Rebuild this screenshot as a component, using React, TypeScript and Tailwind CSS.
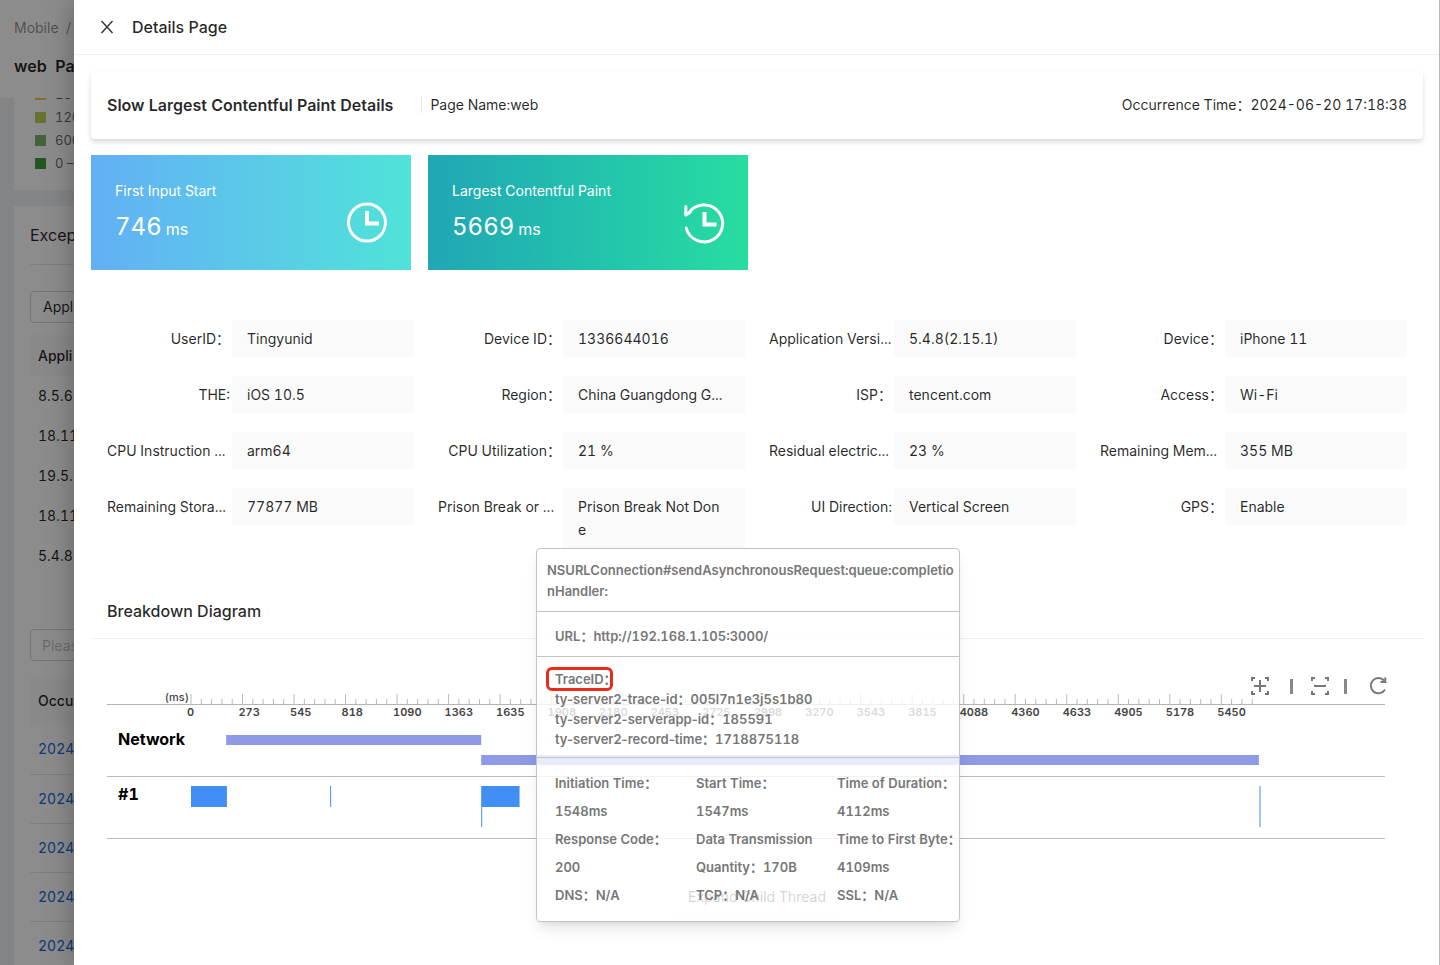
import React from 'react';

interface InfoItem {
  label: string;
  value: string;
}

const infoItems: InfoItem[] = [
  { label: 'UserID：', value: 'Tingyunid' },
  { label: 'Device ID：', value: '1336644016' },
  { label: 'Application Versi...', value: '5.4.8(2.15.1)' },
  { label: 'Device：', value: 'iPhone 11' },
  { label: 'THE:', value: 'iOS 10.5' },
  { label: 'Region：', value: 'China Guangdong G...' },
  { label: 'ISP：', value: 'tencent.com' },
  { label: 'Access：', value: 'Wi-Fi' },
  { label: 'CPU Instruction ...', value: 'arm64' },
  { label: 'CPU Utilization：', value: '21 %' },
  { label: 'Residual electric...', value: '23 %' },
  { label: 'Remaining Mem...', value: '355 MB' },
  { label: 'Remaining Stora...', value: '77877 MB' },
  { label: 'Prison Break or ...', value: 'Prison Break Not Done' },
  { label: 'UI Direction:', value: 'Vertical Screen' },
  { label: 'GPS：', value: 'Enable' },
];

const traceItems: InfoItem[] = [
  { label: 'ty-server2-trace-id：', value: '005l7n1e3j5s1b80' },
  { label: 'ty-server2-serverapp-id：', value: '185591' },
  { label: 'ty-server2-record-time：', value: '1718875118' },
];

const legend = [
  { color: 'bg-[#f5c542]', label: '180' },
  { color: 'bg-[#c3cf57]', label: '120' },
  { color: 'bg-[#7cb56f]', label: '600' },
  { color: 'bg-[#3fa03a]', label: '0 –' },
];

const versions = ['8.5.6', '18.11', '19.5.', '18.11', '5.4.8'];
const occurrences = ['2024', '2024', '2024', '2024', '2024'];

// Timeline scale, in milliseconds
const RANGE = 6316;
const STEP = 272.5;
const marks = [
  0, 273, 545, 818, 1090, 1363, 1635, 1908, 2180, 2453, 2725, 2998, 3270, 3543, 3815, 4088, 4360,
  4633, 4905, 5178, 5450,
];
const minorTicks = Array.from({ length: 104 }, (_, i) => i);

const pct = (ms: number) => `${(ms / RANGE) * 100}%`;

function ClockIcon() {
  return (
    <svg className="h-[42px] w-[42px]" viewBox="0 0 42 42" fill="none" stroke="white" aria-hidden="true">
      <circle cx="21" cy="20.5" r="18.5" strokeWidth="3" />
      <path d="M21 9V21.5h12" strokeWidth="4" />
    </svg>
  );
}

function HistoryIcon() {
  return (
    <svg className="h-[42px] w-[42px]" viewBox="0 0 42 42" fill="none" stroke="white" aria-hidden="true">
      <path d="M5.5 11.5A18.5 18.5 0 1 1 3.2 26" strokeWidth="3" strokeLinecap="round" />
      <path d="M2.8 4.5v8.5l4.4-3" strokeWidth="3" strokeLinecap="round" strokeLinejoin="round" />
      <path d="M21.5 10v12.5h12" strokeWidth="4" />
    </svg>
  );
}

function FocusIcon({ plus = false }: { plus?: boolean }) {
  return (
    <svg className="h-5 w-5" viewBox="0 0 20 20" fill="none" stroke="currentColor" strokeWidth="2" aria-hidden="true">
      <path d="M2 5V2h3M15 2h3v3M18 15v3h-3M5 18H2v-3" />
      <path d={plus ? 'M4 10h12M10 4v12' : 'M4 10h12'} />
    </svg>
  );
}

function ReloadIcon() {
  return (
    <svg className="h-5 w-5" viewBox="0 0 20 20" fill="none" stroke="currentColor" strokeWidth="2" aria-hidden="true">
      <path d="M17 13.5A7.6 7.6 0 1 1 16 4.5" />
      <path d="M17.3 1.5V6h-4.8" />
    </svg>
  );
}

function StatCard({
  title,
  value,
  className,
  children,
}: {
  title: string;
  value: string;
  className: string;
  children: React.ReactNode;
}) {
  return (
    <div className={`flex h-[115px] w-80 justify-between bg-linear-to-r pl-6 pr-[23px] pt-6 text-white ${className}`}>
      <div>
        <div className="text-sm leading-6">{title}</div>
        <div className="mt-3 text-2xl leading-6">
          {value}
          <span className="ml-1 text-base">ms</span>
        </div>
      </div>
      <div className="mt-[23px]">{children}</div>
    </div>
  );
}

function BackgroundPage() {
  return (
    <div className="flex h-full flex-col bg-[#f0f2f5]">
      <header className="h-[98px] shrink-0 bg-white pl-[14px] pt-4">
        <div className="text-sm leading-6 text-black/45">Mobile&nbsp; /</div>
        <h1 className="mt-[14px] text-base font-semibold leading-6">web&nbsp; Pa</h1>
      </header>
      <main className="flex min-h-0 flex-1 flex-col gap-4 overflow-hidden pl-[14px]">
        <section className="h-[92px] shrink-0 overflow-hidden bg-white pl-[21px]">
          <ul className="-mt-[15px]">
            {legend.map((item) => (
              <li key={item.label} className="flex h-[23px] items-center gap-[9px] text-[13px] text-black/60">
                <span className={`h-[11px] w-[11px] ${item.color}`} />
                {item.label}
              </li>
            ))}
          </ul>
        </section>
        <section className="flex-1 bg-white pl-4">
          <h2 className="flex h-[59px] items-center border-b border-gray-200 text-base">Excep</h2>
          <button className="mt-[26px] h-8 w-40 rounded border border-gray-300 px-3 text-left text-sm">Appl</button>
          <table className="mt-3 w-full text-left text-sm">
            <thead>
              <tr className="h-[41px] bg-[#fafafa]">
                <th className="pl-2 font-medium">Appli</th>
              </tr>
            </thead>
            <tbody>
              {versions.map((version, i) => (
                <tr key={i} className="h-10">
                  <td className="pl-2">{version}</td>
                </tr>
              ))}
            </tbody>
          </table>
          <input
            aria-label="Filter"
            placeholder="Pleas"
            className="mt-[53px] block h-8 w-60 rounded border border-gray-300 px-[11px] text-sm placeholder:text-black/25"
          />
          <table className="mt-4 w-full text-left text-sm">
            <thead>
              <tr className="h-12 bg-[#fafafa]">
                <th className="pl-2 font-medium">Occu</th>
              </tr>
            </thead>
            <tbody>
              {occurrences.map((time, i) => (
                <tr key={i} className="h-[49px] border-b border-gray-200">
                  <td className="pl-2">
                    <a href="#" className="text-[#1668dc]">
                      {time}
                    </a>
                  </td>
                </tr>
              ))}
            </tbody>
          </table>
        </section>
      </main>
    </div>
  );
}

function Toolbar() {
  return (
    <div className="-mb-2 mr-[35px] flex h-6 items-center justify-end text-[#777]">
      <button aria-label="Zoom in">
        <FocusIcon plus />
      </button>
      <span className="ml-5 h-[15px] w-[3px] bg-[#888]" />
      <button aria-label="Zoom out" className="ml-[17px]">
        <FocusIcon />
      </button>
      <span className="ml-[14px] h-[15px] w-[3px] bg-[#888]" />
      <button aria-label="Reset" className="ml-[21px]">
        <ReloadIcon />
      </button>
    </div>
  );
}

function Timeline() {
  return (
    <div className="ml-4 mr-[38px]">
      {/* Axis */}
      <div className="flex h-[30px] bg-[linear-gradient(#b5b5b5,#b5b5b5)] bg-[length:100%_1px] bg-[position:0_14px] bg-no-repeat">
        <div className="w-[84px] shrink-0 pr-[2px] text-right text-[11px] font-medium leading-[14px] text-[#444]">(ms)</div>
        <svg className="h-[30px] flex-1 overflow-visible" role="img" aria-label="Time axis">
          {minorTicks.map((i) => (
            <line
              key={i}
              x1={pct((i * STEP) / 5)}
              x2={pct((i * STEP) / 5)}
              y1={i % 5 === 0 ? 4 : 9}
              y2={14}
              stroke="#bbb"
            />
          ))}
          <g transform="translate(-4 0)" className="fill-[#444] text-[11px] font-semibold">
            {marks.map((mark, i) => (
              <text key={mark} x={pct(i * STEP)} y={26}>
                {mark}
              </text>
            ))}
          </g>
        </svg>
      </div>

      {/* Network */}
      <div className="flex h-[57px] border-b border-[#bbb]">
        <div className="w-[84px] shrink-0 pl-[11px] pt-[7px] text-base font-bold leading-6 text-black">Network</div>
        <svg className="h-14 flex-1 fill-[#8e9ae6]" aria-hidden="true">
          <rect x={pct(186)} y="15" width={pct(1349)} height="10" />
          <rect x={pct(1535)} y="35" width={pct(4114)} height="10" />
        </svg>
      </div>

      {/* Main thread */}
      <div className="flex h-[62px] border-b border-[#bbb]">
        <div className="w-[84px] shrink-0 pl-[11px] pt-[5px] text-base font-bold leading-6 text-black">#1</div>
        <svg className="h-[61px] flex-1 fill-[#418ff5]" aria-hidden="true">
          <rect x={pct(0)} y="9" width={pct(190)} height="21" />
          <rect x={pct(736)} y="9" width="1" height="21" />
          <rect x={pct(1535)} y="9" width={pct(203)} height="21" />
          <rect x={pct(1535)} y="30" width="1" height="20" />
          <rect x={pct(5652)} y="9" width="1" height="41" />
        </svg>
      </div>
    </div>
  );
}

function RequestTooltip() {
  return (
    <div
      role="tooltip"
      className="absolute left-[462px] top-[548px] w-[424px] rounded border border-[#c4c4c4] bg-white/80 text-[13px] font-semibold text-[#777] shadow-lg"
    >
      <div className="break-all border-b border-[#c4c4c4] pb-[9px] pl-[10px] pr-[2px] pt-[11px] leading-[21px]">
        NSURLConnection#sendAsynchronousRequest:queue:completionHandler:
      </div>
      <div className="border-b border-[#c4c4c4] px-[18px] pb-[10px] pt-[14px] leading-5">URL：http://192.168.1.105:3000/</div>
      <div className="border-b border-[#c4c4c4] px-[18px] pb-2 pt-3 leading-5">
        <div>
          <span className="relative">
            TraceID：
            <span className="absolute -bottom-1 -left-[9px] -top-1 w-[67px] rounded-md border-3 border-[#ea2b1a]" />
          </span>
        </div>
        {traceItems.map((item) => (
          <div key={item.label} className="proportional-nums">
            {item.label}
            <span className="tabular-nums">{item.value}</span>
          </div>
        ))}
      </div>
      <div className="grid grid-cols-[141px_141px_auto] pb-3 pl-[18px] pt-[11px] leading-7">
        <div>
          Initiation Time：
          <br />
          1548ms
        </div>
        <div>
          Start Time：
          <br />
          1547ms
        </div>
        <div className="whitespace-nowrap">
          Time of Duration：
          <br />
          4112ms
        </div>
        <div>
          Response Code：
          <br />
          200
        </div>
        <div>Data Transmission Quantity：170B</div>
        <div className="whitespace-nowrap">
          Time to First Byte：
          <br />
          4109ms
        </div>
        <div>DNS：N/A</div>
        <div>TCP：N/A</div>
        <div>SSL：N/A</div>
      </div>
    </div>
  );
}

export default function App() {
  return (
    <div className="relative h-screen overflow-hidden font-['Inter','Noto_Sans_CJK_SC',sans-serif] tabular-nums text-black/85">
      <BackgroundPage />
      <div className="absolute inset-0 bg-black/45" />

      <div
        role="dialog"
        aria-labelledby="drawer-title"
        className="absolute inset-y-0 left-[74px] right-0 border-r border-[#b8b8b8] bg-white shadow-[-6px_0_16px_-4px_rgba(0,0,0,0.14),-9px_0_28px_0_rgba(0,0,0,0.1)]"
      >
        <div className="flex h-[55px] items-center gap-[18px] border-b border-[#f0f0f0] pl-[26px]">
          <button aria-label="Close">
            <svg className="h-[14px] w-[14px]" viewBox="0 0 14 14" stroke="#333" strokeWidth="1.4" aria-hidden="true">
              <path d="M1.5 1l11 12M12.5 1l-11 12" />
            </svg>
          </button>
          <h2 id="drawer-title" className="text-base font-medium">
            Details Page
          </h2>
        </div>

        <div className="pl-[17px] pr-4 pt-4">
          <div className="flex h-[68px] items-center rounded px-4 text-sm shadow-[0_3px_5px_rgba(0,0,0,0.15)]">
            <h3 className="text-base font-semibold">Slow Largest Contentful Paint Details</h3>
            <span className="ml-7 h-4 w-px bg-gray-200" />
            <span className="ml-2">Page Name:web</span>
            <span className="ml-auto">Occurrence Time：2024-06-20 17:18:38</span>
          </div>

          <div className="mt-4 flex gap-[17px]">
            <StatCard title="First Input Start" value="746" className="from-[#62aff5] to-[#4fe3d8]">
              <ClockIcon />
            </StatCard>
            <StatCard title="Largest Contentful Paint" value="5669" className="from-[#21a6b5] to-[#28dda0]">
              <HistoryIcon />
            </StatCard>
          </div>

          <dl className="mx-4 mt-[50px] grid grid-cols-4 gap-x-6 gap-y-[19px] text-sm leading-[23px]">
            {infoItems.map((item) => (
              <div key={item.label} className="flex items-start">
                <dt
                  className={`w-[125px] shrink-0 whitespace-nowrap py-[7px] pr-[2px] ${
                    item.label.endsWith('...') ? 'text-left' : 'text-right'
                  }`}
                >
                  {item.label}
                </dt>
                <dd className="min-w-0 flex-1 break-all bg-[#fafafa] py-[7px] pl-[15px] pr-5">{item.value}</dd>
              </div>
            ))}
          </dl>

          <h3 className="mt-9 flex h-[55px] items-center border-b border-[#f0f0f0] pl-4 text-base font-medium">
            Breakdown Diagram
          </h3>
          <div className="mt-[35px]">
            <Toolbar />
            <Timeline />
          </div>
          <div className="mt-10 flex justify-center">
            <button className="h-9 rounded px-4 text-sm shadow-xs">Expand Child Thread</button>
          </div>
        </div>

        <RequestTooltip />
      </div>
    </div>
  );
}
